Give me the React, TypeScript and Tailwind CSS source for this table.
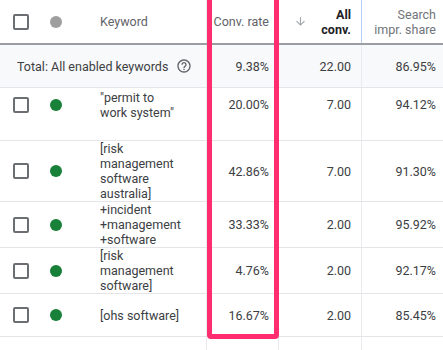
import React from 'react';

type Row = {
  lines: string[];
  rate: string;
  conv: string;
  share: string;
  h: string;
  pad?: string;
};

const ROWS: Row[] = [
  { lines: ['"permit to', 'work system"'], rate: '20.00%', conv: '7.00', share: '94.12%', h: 'h-[53px]', pad: 'pb-[19px]' },
  { lines: ['[risk', 'management', 'software', 'australia]'], rate: '42.86%', conv: '7.00', share: '91.30%', h: 'h-[61px]' },
  { lines: ['+incident', '+management', '+software'], rate: '33.33%', conv: '2.00', share: '95.92%', h: 'h-[46px]' },
  { lines: ['[risk', 'management', 'software]'], rate: '4.76%', conv: '2.00', share: '92.17%', h: 'h-[46px]' },
  { lines: ['[ohs software]'], rate: '16.67%', conv: '2.00', share: '85.45%', h: 'h-[43px]' },
];

const COLS = 'grid grid-cols-[40px_60px_107px_72px_83px_81px]';

function Checkbox() {
  return <div className="w-[16px] h-[16px] ml-[13px] border-2 border-[#6b6e72] rounded-[2px]" />;
}

function HelpIcon() {
  return (
    <svg viewBox="0 0 24 24" className="w-[16px] h-[16px] ml-[8px]" fill="#5f6368">
      <path d="M11 18h2v-2h-2v2zm1-16C6.48 2 2 6.48 2 12s4.48 10 10 10 10-4.48 10-10S17.52 2 12 2zm0 18c-4.41 0-8-3.59-8-8s3.59-8 8-8 8 3.59 8 8-3.59 8-8 8zm0-14c-2.21 0-4 1.79-4 4h2c0-1.1.9-2 2-2s2 .9 2 2c0 2-3 1.75-3 5h2c0-2.25 3-2.5 3-5 0-2.21-1.79-4-4-4z" />
    </svg>
  );
}

export default function App() {
  return (
    <div
      className="relative w-[443px] h-[350px] overflow-hidden bg-white text-[12.5px] leading-[15px] text-[#3c4043]"
      style={{ fontFamily: 'Roboto, "Liberation Sans", sans-serif' }}
    >
      {/* Header */}
      <div className={`${COLS} h-[45px] border-b-2 border-[#9a9da1] text-[#5f6368]`}>
        <div className="flex items-center">
          <Checkbox />
        </div>
        <div className="flex items-center">
          <div className="w-[12px] h-[12px] ml-[10px] rounded-full bg-[#9e9e9e]" />
        </div>
        <div className="flex items-center border-r border-[#e8eaed]">Keyword</div>
        <div className="flex items-center justify-end pr-[9px] border-r border-[#e8eaed]">Conv. rate</div>
        <div className="flex items-center justify-between pl-[15px] pr-[10px] border-r border-[#b7cdf3]">
          <svg viewBox="0 0 24 24" className="w-[13px] h-[13px]" fill="#a0a4a8">
            <path d="M20 12l-1.41-1.41L13 16.17V4h-2v12.17l-5.58-5.59L4 12l8 8 8-8z" />
          </svg>
          <div className="text-right font-bold text-[#202124]">
            All
            <br />
            conv.
          </div>
        </div>
        <div className="flex items-center justify-end pr-[7px] text-right text-[#70757a]">
          Search
          <br />
          impr. share
        </div>
      </div>

      {/* Total */}
      <div className={`${COLS} h-[43px] bg-[#f8f9fa] border-b border-[#e3e5e8]`}>
        <div className="col-span-3 flex items-center pl-[17px] border-r border-[#e8eaed]">
          Total: All enabled keywords
          <HelpIcon />
        </div>
        <div className="flex items-center justify-end pr-[9px] border-r border-[#e8eaed]">9.38%</div>
        <div className="flex items-center justify-end pr-[10px] border-r border-[#e8eaed]">22.00</div>
        <div className="flex items-center justify-end pr-[7px]">86.95%</div>
      </div>

      {/* Rows */}
      {ROWS.map((r, i) => (
        <div key={i} className={`${COLS} ${r.h} border-b border-[#e3e5e8]`}>
          <div className={`flex items-center ${r.pad ?? ''}`}>
            <Checkbox />
          </div>
          <div className={`flex items-center ${r.pad ?? ''}`}>
            <div className="w-[12px] h-[12px] ml-[10px] rounded-full bg-[#188038]" />
          </div>
          <div className={`flex items-center border-r border-[#e8eaed] ${r.pad ?? ''}`}>
            <div>
              {r.lines.map((l, j) => (
                <div key={j} className="whitespace-nowrap">{l}</div>
              ))}
            </div>
          </div>
          <div className={`flex items-center justify-end pr-[9px] border-r border-[#e8eaed] ${r.pad ?? ''}`}>{r.rate}</div>
          <div className={`flex items-center justify-end pr-[10px] border-r border-[#e8eaed] ${r.pad ?? ''}`}>{r.conv}</div>
          <div className={`flex items-center justify-end pr-[7px] ${r.pad ?? ''}`}>{r.share}</div>
        </div>
      ))}

      {/* Filler */}
      <div className={`${COLS} h-[20px]`}>
        <div />
        <div />
        <div className="border-r border-[#e8eaed]" />
        <div className="border-r border-[#e8eaed]" />
        <div className="border-r border-[#e8eaed]" />
        <div />
      </div>

      {/* Highlight annotation */}
      <div className="absolute left-[207px] top-[-6px] w-[72px] h-[345px] border-[5px] border-[#ff2d6f] rounded-[4px] pointer-events-none" />
    </div>
  );
}
